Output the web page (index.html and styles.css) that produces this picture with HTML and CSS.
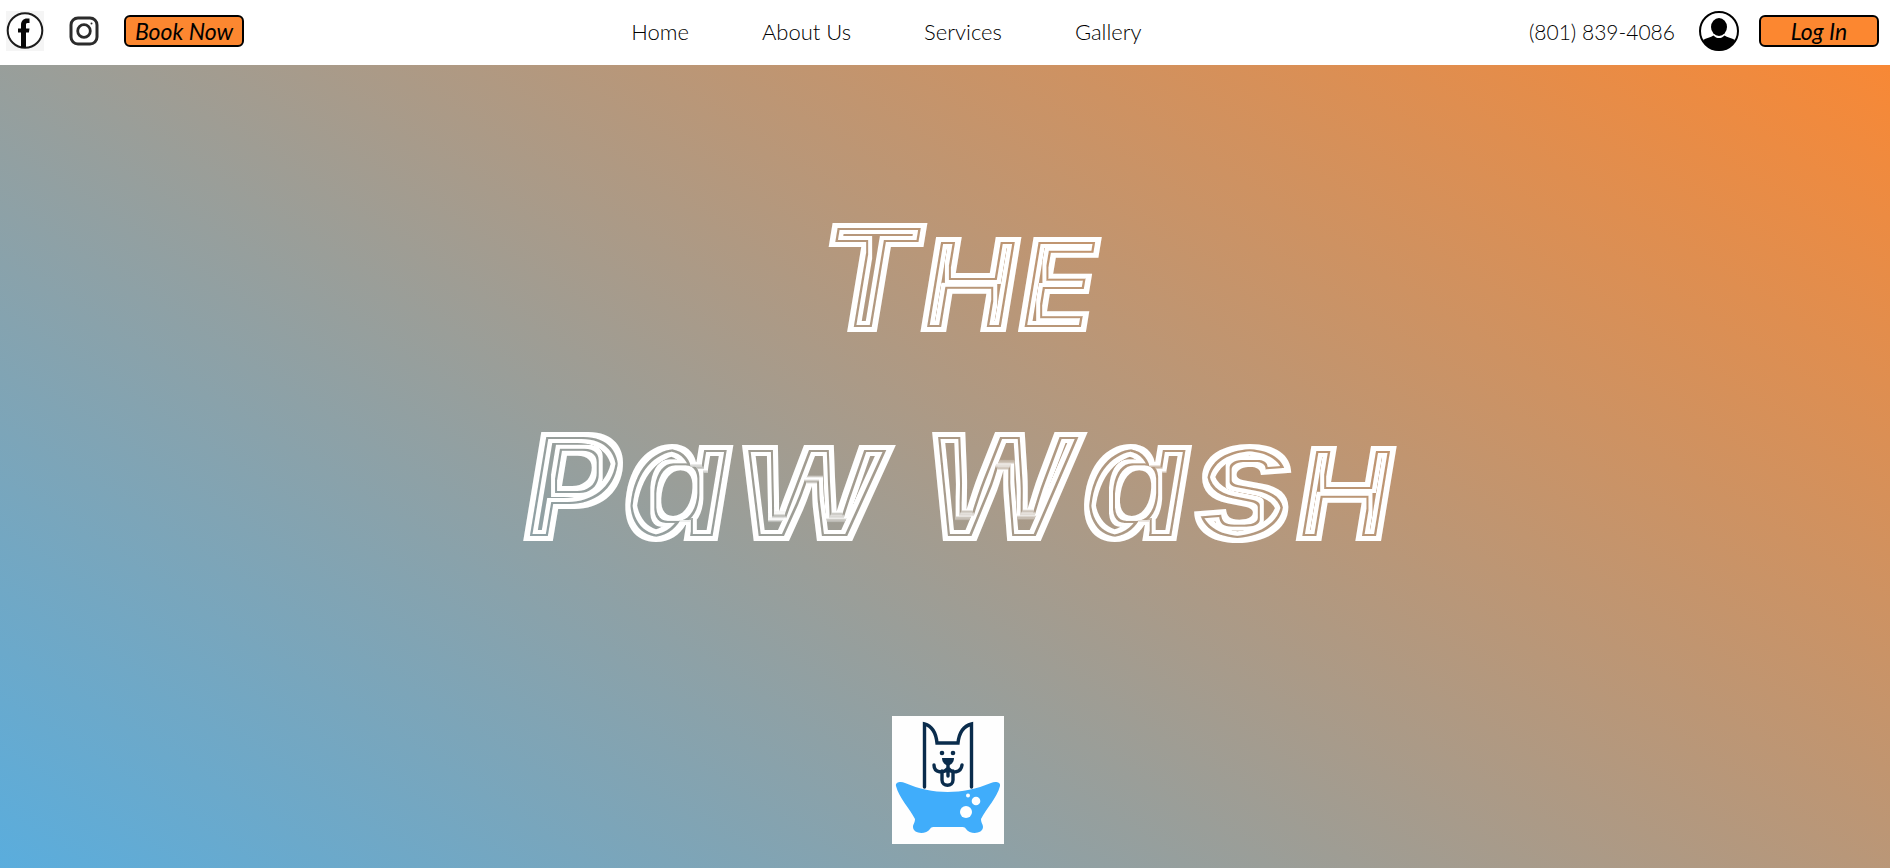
FILE: index.html
```html
<!DOCTYPE html>
<html lang="en">
<head>
<meta charset="utf-8">
<meta name="viewport" content="width=device-width, initial-scale=1">
<title>The Paw Wash</title>
<link rel="stylesheet" href="styles.css">
</head>
<body>
<header class="topbar">
  <div class="side">
    <a class="icon facebook" href="#" aria-label="Facebook">
      <svg viewBox="0 0 38 40" width="38" height="40"><rect width="38" height="40" fill="#f5f5f5"/><circle cx="19" cy="19.500" r="17.300" fill="#fff" stroke="#1c1c1c" stroke-width="2"/><path d="M15 36.500V21.500H12v-4h3V14C15 10 17.500 7.500 21 7.500h2.500V12h-2c-1.300 0-1.500.7-1.500 2v3.500h3.500l-.6 4H20v15z" fill="#080808"/></svg>
    </a>
    <a class="icon instagram" href="#" aria-label="Instagram">
      <svg viewBox="0 0 30 30" width="30" height="30" fill="none" stroke="#2b2b2b"><rect x="2" y="2" width="26" height="26" rx="7" stroke-width="3"/><circle cx="15" cy="15" r="6.300" stroke-width="2.800"/><circle cx="22.500" cy="7.500" r="1" fill="#2b2b2b" stroke="none"/></svg>
    </a>
    <button class="action" type="button">Book Now</button>
  </div>
  <nav class="menu">
    <a href="#">Home</a>
    <a href="#">About Us</a>
    <a href="#">Services</a>
    <a href="#">Gallery</a>
  </nav>
  <div class="side end">
    <a class="phone" href="tel:8018394086">(801) 839-4086</a>
    <svg class="avatar" viewBox="0 0 40 40" width="40" height="40" aria-hidden="true"><circle cx="20" cy="20" r="19" fill="#fff" stroke="#000" stroke-width="2"/><ellipse cx="20" cy="16" rx="8" ry="9"/><path d="M4 29c3-2 8-2.500 10.500-4.500 3 3.400 8 3.400 11 0C28 26.500 33 27 36 29 32.500 36 27 39.500 20 39.500S7.500 36 4 29z"/></svg>
    <button class="action" type="button">Log In</button>
  </div>
</header>
<main class="hero">
  <svg class="defs" width="0" height="0" aria-hidden="true">
    <filter id="inline-stripes" x="-5%" y="-10%" width="110%" height="120%" color-interpolation-filters="sRGB">
      <feMorphology in="SourceGraphic" operator="erode" radius="5" result="a"/>
      <feMorphology in="SourceGraphic" operator="erode" radius="7" result="b"/>
      <feMorphology in="SourceGraphic" operator="erode" radius="11" result="c"/>
      <feComposite in="SourceGraphic" in2="a" operator="out" result="outer"/>
      <feComposite in="b" in2="c" operator="out" result="inner"/>
      <feMerge><feMergeNode in="outer"/><feMergeNode in="inner"/></feMerge>
    </filter>
  </svg>
  <h1 class="title">
    <span class="line">T<span class="caps">HE</span></span>
    <span class="line">P<span class="lower">aw</span> W<span class="lower">as</span><span class="caps">H</span></span>
  </h1>
  <svg class="logo" viewBox="0 0 112 128" width="112" height="128" role="img" aria-label="Dog in a bathtub">
    <rect width="112" height="128" fill="#fefefe"/>
    <g fill="none" stroke="#0a2c4c" stroke-width="3.400" stroke-linecap="round" stroke-linejoin="miter">
      <path d="M32.500 71V8C40 10 44 17 45 27h21C67 17 72 10 79.500 8v63"/>
      <path d="M42 49c0 8 10 9 14 3 4 6 13 5 14-3M56 44v16M50 55v9c0 7 11 7 11 0v-9"/>
    </g>
    <g fill="#0a2c4c"><circle cx="50" cy="37" r="2.300"/><circle cx="61" cy="37" r="2.300"/><path d="M50 42h12c0 4-2 6-6 8-4-2-6-4-6-8z"/></g>
    <path d="M4 70c-1-4 5-5 9-3 28 12 57 12 86 0 4-2 10-1 9 3-3 12-14 23-19 33 0 4 2 5 2 8 0 7-13 8-17 2-1-2-3-2-5-2H43c-2 0-4 0-5 2-4 6-17 5-17-2 0-3 2-4 2-8C18 93 7 82 4 70z" fill="#40adfb"/>
    <g fill="#fff"><circle cx="74" cy="96" r="6"/><circle cx="84" cy="85" r="4.300"/><circle cx="76" cy="79.500" r="2"/></g>
  </svg>
</main>
</body>
</html>
```
FILE: styles.css
```css
* { box-sizing: border-box; }

body {
  margin: 0;
  min-height: 100vh;
  display: flex;
  flex-direction: column;
  background: linear-gradient(33deg, #5aaddd, #fd8730);
  font-family: Lato, "Open Sans", sans-serif;
  font-weight: 300;
  font-size: 22px;
  color: #000;
}

.topbar {
  display: flex;
  justify-content: space-between;
  align-items: center;
  height: 65px;
  padding: 0 11px 3px 6px;
  background: #fff;
}

.side {
  display: flex;
  align-items: center;
  gap: 25px;
}

.end { gap: 20px; }

.icon,
.icon svg,
.avatar { display: block; }

.menu {
  display: flex;
  gap: 73px;
}

a {
  color: inherit;
  text-decoration: none;
}

.phone {
  margin-right: 4px;
  font-size: 21px;
}

.action {
  width: 120px;
  height: 32px;
  padding: 0;
  border: 2px solid #000;
  border-radius: 6px;
  background: #fc8730;
  font: italic 400 23px/28px Lato, "Open Sans", sans-serif;
  color: #000;
}

.hero {
  flex: 1;
  display: flex;
  flex-direction: column;
  align-items: center;
  justify-content: space-between;
  padding: 108px 0 24px 6px;
}

.defs { position: absolute; }

.title {
  margin: 0;
  padding-left: 20px;
  font: italic 900 150px/209px Inter, Lato, sans-serif;
  color: #fff;
  text-align: center;
  filter: url(#inline-stripes);
}

.line {
  display: block;
  padding: 0 24px;
}

.caps,
.lower { line-height: 1; }

.caps { font-size: 130px; }

.lower { font-size: 175px; }

.logo { display: block; }
```
